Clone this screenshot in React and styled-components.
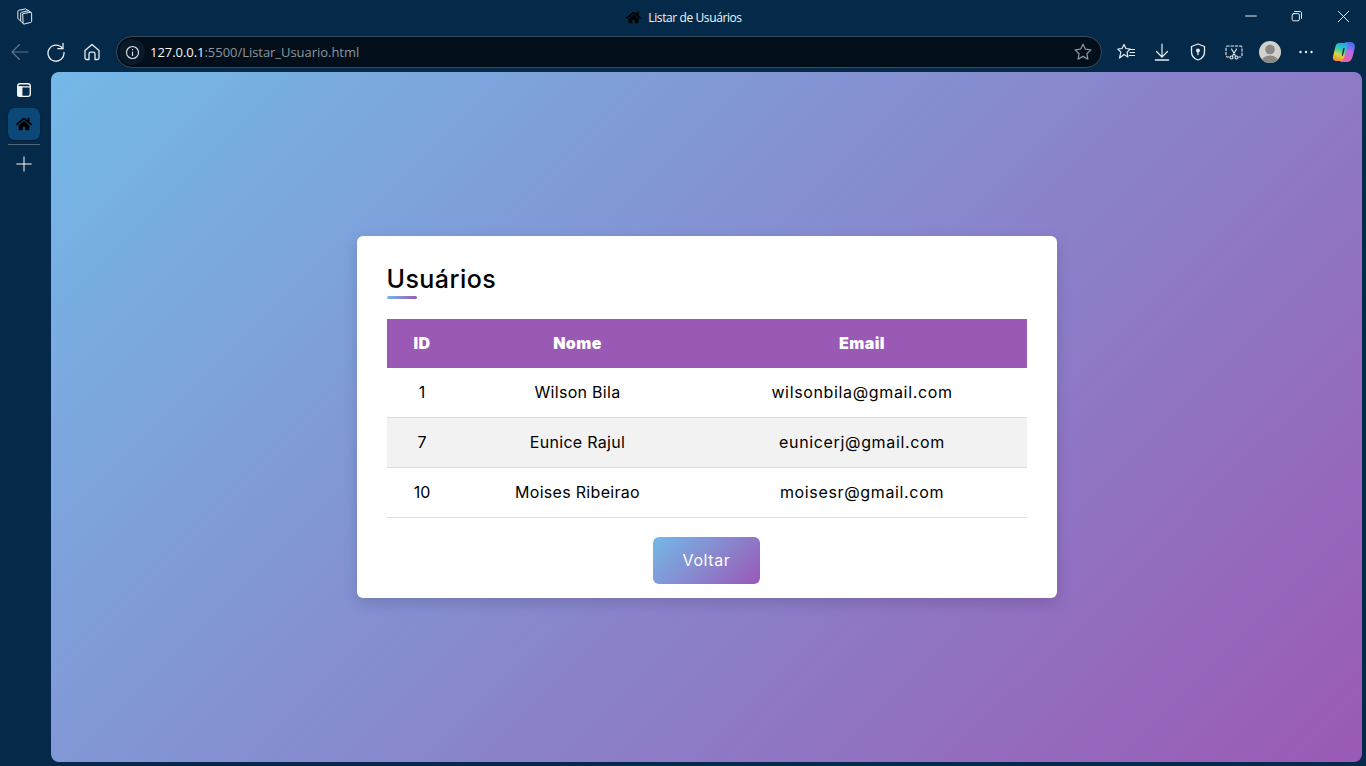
import React from 'react';
import styled, { createGlobalStyle } from 'styled-components';
import { FaHome } from 'react-icons/fa';

const GlobalStyle = createGlobalStyle`
  html, body {
    margin: 0;
    padding: 0;
    height: 100%;
    background: #052a49;
    overflow: hidden;
  }
  * { box-sizing: border-box; }
`;

const usuarios = [
  { id: 1, nome: 'Wilson Bila', email: 'wilsonbila@gmail.com' },
  { id: 7, nome: 'Eunice Rajul', email: 'eunicerj@gmail.com' },
  { id: 10, nome: 'Moises Ribeirao', email: 'moisesr@gmail.com' },
];

const Janela = styled.div`
  width: 1366px;
  height: 766px;
  display: flex;
  flex-direction: column;
  background: #052a49;
  font-family: Inter, "Liberation Sans", sans-serif;
`;

const TitleBar = styled.div`
  height: 36px;
  flex: none;
  display: grid;
  grid-template-columns: 1fr auto 1fr;
  align-items: start;
`;

const TitleLeft = styled.div`
  display: flex;
  padding: 7px 0 0 15px;
`;

const TitleCenter = styled.div`
  display: flex;
  align-items: center;
  gap: 7px;
  height: 34px;
  margin-left: 2px;
  color: #f2f5f8;
  font-family: "Open Sans", "Noto Sans", sans-serif;
  font-size: 12px;
  letter-spacing: -0.4px;
`;

const WindowButtons = styled.div`
  display: flex;
  justify-content: flex-end;
`;

const WindowButton = styled.div`
  width: 46px;
  height: 32px;
  display: flex;
  align-items: center;
  justify-content: center;
`;

const Toolbar = styled.div`
  height: 36px;
  flex: none;
  display: flex;
  align-items: center;
  padding: 0 8px 4px 2px;
`;

const ToolButton = styled.div`
  width: 36px;
  height: 30px;
  flex: none;
  display: flex;
  align-items: center;
  justify-content: center;
`;

const AddressBar = styled.div`
  flex: none;
  width: 986px;
  height: 32px;
  margin: 0 6px;
  display: flex;
  align-items: center;
  background: #020f1b;
  border: 1px solid #3c4a58;
  border-radius: 16px;
  padding-right: 8px;
`;

const InfoButton = styled.div`
  width: 26px;
  height: 26px;
  margin-left: 2px;
  flex: none;
  border-radius: 50%;
  background: #0b1a28;
  display: flex;
  align-items: center;
  justify-content: center;
`;

const Url = styled.div`
  flex: 1;
  margin-left: 5px;
  font-family: "Open Sans", "Noto Sans", sans-serif;
  font-size: 13px;
  letter-spacing: -0.04px;
  color: #8d949b;
  white-space: nowrap;
  span { color: #f4f6f8; }
`;

const Corpo = styled.div`
  flex: 1;
  display: flex;
  min-height: 0;
  padding: 0 4px 4px 0;
`;

const Sidebar = styled.div`
  width: 51px;
  flex: none;
  display: flex;
  flex-direction: column;
  align-items: flex-start;
  padding-left: 8px;
`;

const SideIcon = styled.div`
  width: 32px;
  height: 32px;
  margin-top: ${(p) => p.$top || 2}px;
  display: flex;
  align-items: center;
  justify-content: center;
`;

const ActiveTab = styled.div`
  width: 32px;
  height: 32px;
  margin-top: 2px;
  display: flex;
  align-items: center;
  justify-content: center;
  border-radius: 7px;
  background: #0b4877;
  box-shadow: 0 1px 3px rgba(0, 0, 0, 0.35);
`;

const SideDivider = styled.div`
  width: 32px;
  height: 1px;
  margin-top: 4px;
  background: #51677a;
`;

const Pagina = styled.main`
  flex: 1;
  display: flex;
  align-items: center;
  justify-content: center;
  border-radius: 8px;
  background: linear-gradient(135deg, #74b9e8, #9b59b6);
`;

const Card = styled.section`
  width: 700px;
  height: 362px;
  padding: 30px;
  background: #fff;
  border-radius: 6px;
  box-shadow: 0 5px 15px rgba(0, 0, 0, 0.15);
  color: #000;
`;

const Titulo = styled.h1`
  margin: 0;
  height: 30px;
  font-size: 25px;
  line-height: 27px;
  font-weight: 500;
  letter-spacing: 0.45px;
`;

const Sublinhado = styled.div`
  width: 30px;
  height: 3px;
  border-radius: 3px;
  background: linear-gradient(135deg, #74b9e8, #9b59b6);
`;

const Tabela = styled.table`
  width: 640px;
  margin-top: 20px;
  border-collapse: separate;
  border-spacing: 0;
  table-layout: fixed;
`;

const Th = styled.th`
  height: 49px;
  padding: 0 0 2px;
  background: #9b59b6;
  color: #fff;
  font-size: 16px;
  font-weight: 900;
  letter-spacing: 0.4px;
  text-align: center;
`;

const Linha = styled.tr`
  background: ${(p) => (p.$par ? '#f2f2f2' : '#fff')};
`;

const Td = styled.td`
  height: 50px;
  padding: 0 0 2px;
  border-bottom: 1px solid #ddd;
  font-size: 16px;
  letter-spacing: ${(p) => p.$espaco || 0}px;
  text-align: center;
`;

const Acoes = styled.div`
  display: flex;
  justify-content: center;
  margin-top: 19px;
`;

const BotaoVoltar = styled.button`
  width: 107px;
  height: 47px;
  padding: 0 0 2px;
  border: none;
  border-radius: 6px;
  background: linear-gradient(135deg, #74b9e8, #9b59b6);
  color: #fff;
  font-family: inherit;
  font-size: 16px;
  letter-spacing: 0.6px;
`;

const LogoCopilot = styled.svg`
  margin-left: 3px;
`;

const Linhas = ({ children, size = 20, color = '#e8edf2', sw = 1.3 }) => (
  <svg width={size} height={size} viewBox="0 0 20 20" fill="none" stroke={color} strokeWidth={sw} strokeLinecap="round" strokeLinejoin="round">
    {children}
  </svg>
);

const CopilotLogo = () => (
  <LogoCopilot width="24" height="22" viewBox="0 0 24 22">
    <defs>
      <linearGradient id="copEsq" x1="0.6" y1="0" x2="0.3" y2="1">
        <stop offset="0" stopColor="#1fa8ee" />
        <stop offset="0.35" stopColor="#35d0a8" />
        <stop offset="0.65" stopColor="#d8d83f" />
        <stop offset="1" stopColor="#f58a2e" />
      </linearGradient>
      <linearGradient id="copDir" x1="0.6" y1="0" x2="0.4" y2="1">
        <stop offset="0" stopColor="#3a6ee8" />
        <stop offset="0.45" stopColor="#b06af0" />
        <stop offset="1" stopColor="#f4609a" />
      </linearGradient>
    </defs>
    <path d="M14 1h4.500c3 0 5 2.500 4.300 5.500L20.500 16c-.8 3-2.800 5-5.500 5H9.500c-1.500 0-2.300-1-1.800-2.500L12.500 3c.3-1.200.6-2 1.500-2z" fill="url(#copDir)" />
    <path d="M7 2h7c1.500 0 2.200 1 1.800 2.500L12 16.500c-.7 2.500-2.500 3.500-4.500 3.500H4.500C1.800 20 .3 18 1 15.500L3.500 5.500C4 3.500 5.300 2 7 2z" fill="url(#copEsq)" />
    <path d="M11.500 7c.8-.2 1.200.3 1 1.200l-1.300 5.300c-.3 1-.8 1.500-1.500 1.700l1.300-7c.1-.7.200-1 .5-1.200z" fill="#17223f" />
  </LogoCopilot>
);

function App() {
  return (
    <Janela>
      <GlobalStyle />
      <TitleBar>
        <TitleLeft>
          <Linhas size={19} sw={1.05}>
            <path d="M8.500 7l8-1.500c.6-.1 1 .3 1 .9v8.800c0 .5-.3.9-.8 1L9.500 18c-.6.1-1-.3-1-.9z" />
            <path d="M8.500 17l-2-1.500c-.4-.3-.5-.6-.5-1V6.500c0-.5.3-.8.8-1L14.500 4l2 1.500" />
            <path d="M6 14.500l-2.500-1.800c-.4-.3-.5-.6-.5-1V4.500c0-.5.3-.8.8-1L11 2l3.500 2" />
          </Linhas>
        </TitleLeft>
        <TitleCenter>
          <FaHome size={15} color="#000" />
          Listar de Usuários
        </TitleCenter>
        <WindowButtons>
          <WindowButton>
            <Linhas size={12} sw={1.5} color="#fff"><path d="M1 10h18" /></Linhas>
          </WindowButton>
          <WindowButton>
            <Linhas size={12} sw={1.5} color="#fff">
              <rect x="2" y="6" width="12" height="12" rx="2.500" />
              <path d="M6 2.500h9c1.500 0 2.500 1 2.500 2.500v9" />
            </Linhas>
          </WindowButton>
          <WindowButton>
            <Linhas size={13} sw={1.4} color="#fff"><path d="M2 2l16 16M18 2L2 18" /></Linhas>
          </WindowButton>
        </WindowButtons>
      </TitleBar>

      <Toolbar>
        <ToolButton>
          <Linhas color="#5f7385" sw={1.2}><path d="M18 10H2M9.500 2.500L2 10l7.500 7.500" /></Linhas>
        </ToolButton>
        <ToolButton>
          <Linhas>
            <path d="M16.500 6.500A8 8 0 1 0 18 10.500" />
            <path d="M17 1.500v5.200h-5.200" />
          </Linhas>
        </ToolButton>
        <ToolButton>
          <Linhas>
            <path d="M3 8.500L10 2.500l7 6v7.500c0 .8-.6 1.500-1.500 1.500H13v-5.500c0-1-.8-1.800-1.800-1.800H8.800c-1 0-1.800.8-1.800 1.800v5.500H4.500c-.9 0-1.500-.7-1.500-1.500z" />
          </Linhas>
        </ToolButton>
        <AddressBar>
          <InfoButton>
            <Linhas size={15} color="#dfe4e9" sw={1.5}>
              <circle cx="10" cy="10" r="8" />
              <path d="M10 9.500v4.500M10 6.200v.2" />
            </Linhas>
          </InfoButton>
          <Url><span>127.0.0.1</span>:5500/Listar_Usuario.html</Url>
          <Linhas color="#8d959c" sw={1.2}>
            <path d="M10 2.200l2.400 5 5.500.7-4 3.800 1 5.400-4.900-2.700-4.900 2.700 1-5.400-4-3.800 5.500-.7z" />
          </Linhas>
        </AddressBar>
        <ToolButton>
          <Linhas sw={1.2}>
            <path d="M8 2.500l1.900 4 4.300.6-3.100 3 .8 4.800L8 12.500 3.500 16l1.400-5.900-3.100-3 4.300-.6z" />
            <path d="M13.500 7.500h5M14 10.500h4.500M13.500 13.500h5" />
          </Linhas>
        </ToolButton>
        <ToolButton>
          <Linhas sw={1.2}>
            <path d="M10 2v12.500M4.500 9.500l5.500 5.500 5.500-5.500" />
            <path d="M3.500 18h13" strokeWidth="1.6" />
          </Linhas>
        </ToolButton>
        <ToolButton>
          <Linhas>
            <path d="M10 2l6.500 2.500v5.500c0 4-3 6.800-6.500 8-3.500-1.200-6.500-4-6.500-8V4.500z" />
            <circle cx="10" cy="8.500" r="1.300" fill="#e8edf2" />
            <path d="M10 9v3.500" />
          </Linhas>
        </ToolButton>
        <ToolButton>
          <Linhas sw={1.1}>
            <path d="M5 15H3.500C2.700 15 2 14.300 2 13.500v-8C2 4.700 2.700 4 3.500 4h13c.8 0 1.500.7 1.500 1.500v8c0 .8-.7 1.500-1.500 1.500H15" strokeDasharray="2.500 1.800" />
            <path d="M7.500 7l3.800 6.500M12.500 7l-3.800 6.500" />
            <circle cx="7.500" cy="15.500" r="1.500" />
            <circle cx="12.500" cy="15.500" r="1.500" />
          </Linhas>
        </ToolButton>
        <ToolButton>
          <svg width="22" height="22" viewBox="0 0 22 22">
            <defs>
              <clipPath id="avatar"><circle cx="11" cy="11" r="11" /></clipPath>
            </defs>
            <g clipPath="url(#avatar)">
              <rect width="22" height="22" fill="#d3d1cc" />
              <circle cx="11" cy="8.500" r="4.800" fill="#8b8985" />
              <ellipse cx="11" cy="20" rx="8" ry="5.500" fill="#8b8985" />
            </g>
          </svg>
        </ToolButton>
        <ToolButton>
          <svg width="16" height="4" viewBox="0 0 16 4" fill="#e8edf2">
            <circle cx="2.500" cy="2" r="1.200" />
            <circle cx="8" cy="2" r="1.200" />
            <circle cx="13.500" cy="2" r="1.200" />
          </svg>
        </ToolButton>
        <ToolButton>
          <CopilotLogo />
        </ToolButton>
      </Toolbar>

      <Corpo>
        <Sidebar>
          <SideIcon>
            <Linhas size={18} color="#f2f5f8" sw={1.5}>
              <rect x="3" y="3" width="14" height="14" rx="2.500" />
              <path d="M3 6.500h14" />
              <path d="M7.500 6.500V17H5a2 2 0 0 1-2-2V6.500z" fill="#f2f5f8" />
            </Linhas>
          </SideIcon>
          <ActiveTab>
            <FaHome size={16} color="#000" />
          </ActiveTab>
          <SideDivider />
          <SideIcon $top={3}>
            <Linhas size={18} color="#fff" sw={1.1}><path d="M10 2v16M2 10h16" /></Linhas>
          </SideIcon>
        </Sidebar>

        <Pagina>
          <Card>
            <Titulo>Usuários</Titulo>
            <Sublinhado />
            <Tabela>
              <colgroup>
                <col width="71" />
                <col width="240" />
                <col width="329" />
              </colgroup>
              <thead>
                <tr>
                  <Th>ID</Th>
                  <Th>Nome</Th>
                  <Th>Email</Th>
                </tr>
              </thead>
              <tbody>
                {usuarios.map((usuario, i) => (
                  <Linha key={usuario.id} $par={i % 2 === 1}>
                    <Td>{usuario.id}</Td>
                    <Td $espaco={0.3}>{usuario.nome}</Td>
                    <Td $espaco={0.65}>{usuario.email}</Td>
                  </Linha>
                ))}
              </tbody>
            </Tabela>
            <Acoes>
              <BotaoVoltar>Voltar</BotaoVoltar>
            </Acoes>
          </Card>
        </Pagina>
      </Corpo>
    </Janela>
  );
}

export default App;
